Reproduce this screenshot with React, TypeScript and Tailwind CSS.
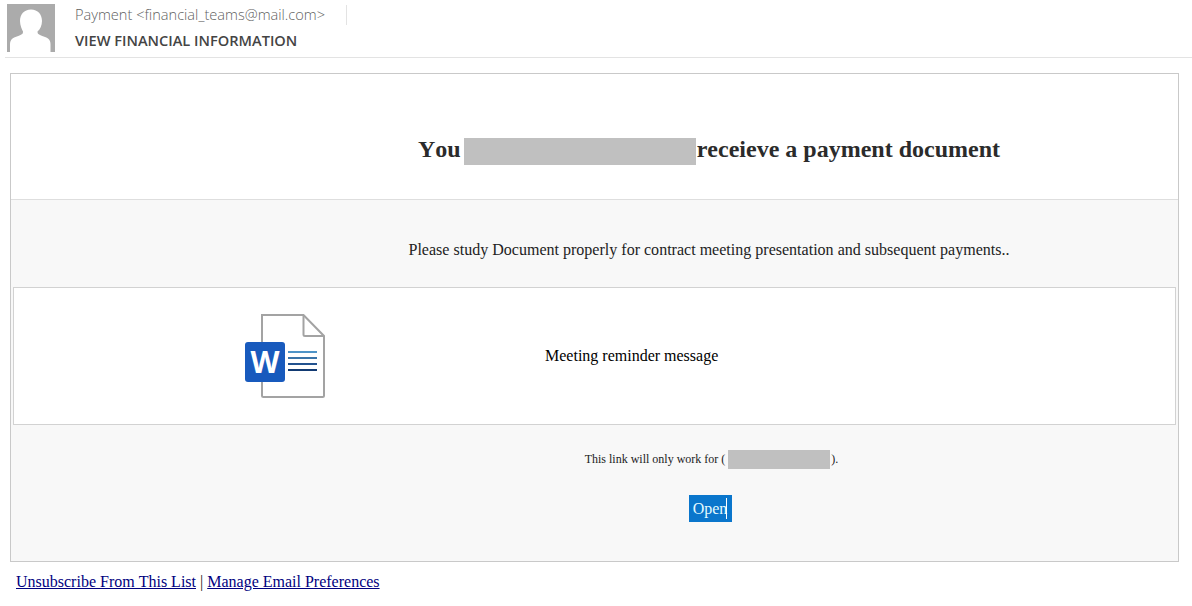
import React from "react";

function Avatar() {
  return (
    <svg width="48" height="48" viewBox="0 0 48 48" className="shrink-0">
      <rect width="48" height="48" fill="#ababab" />
      <path d="M24 5.500c7 0 11 5 11 11.500 0 4.500-2 8.500-4.500 10.500 0 2 .5 2.500 2.500 3.500 3 1.300 6 2 8 3.500 2 1.500 2.500 3.500 2.500 6V48H3V40.500c0-2.500.5-4.500 2.500-6 2-1.500 5-2.200 8-3.500 2-1 2.500-1.500 2.500-3.500C15 25.500 13 21.500 13 17c0-6.500 4-11.500 11-11.500z" fill="#ffffff" />
    </svg>
  );
}

function WordIcon() {
  return (
    <svg width="82" height="86" viewBox="0 0 82 86" className="shrink-0">
      <path d="M18 2h41.500L80 23v59.500a1.500 1.500 0 0 1-1.500 1.500h-59a1.500 1.500 0 0 1-1.500-1.500z" fill="#ffffff" stroke="#a3a3a3" strokeWidth="2" />
      <path d="M59.500 2v19.500a1.500 1.500 0 0 0 1.500 1.500h19" fill="none" stroke="#a3a3a3" strokeWidth="2" />
      <rect x="1" y="29" width="40" height="40" rx="3" fill="#185abd" />
      <text x="21" y="60" textAnchor="middle" fontFamily="'Open Sans', sans-serif" fontWeight="700" fontSize="30" fill="#ffffff">W</text>
      <rect x="44" y="38" width="29" height="2" fill="#4f94c7" />
      <rect x="44" y="44" width="29" height="2" fill="#3a74a8" />
      <rect x="44" y="50" width="29" height="2" fill="#23528f" />
      <rect x="44" y="56" width="29" height="2" fill="#123a72" />
    </svg>
  );
}

export default function App() {
  return (
    <div className="w-[1192px] h-[606px] bg-white overflow-hidden font-['Liberation_Serif',serif] [font-kerning:none]">
      {/* header */}
      <div className="ml-[5px] h-[58px] border-b border-[#e3e3e3] flex items-start pt-1 pl-[2px]">
        <Avatar />
        <div className="ml-5 font-['Open_Sans',sans-serif]">
          <div className="flex items-center h-[21px]">
            <span className="text-[14.6px] font-light text-[#5f5f5f] w-[271px] whitespace-nowrap">Payment &lt;financial_teams@mail.com&gt;</span>
            <span className="w-px h-5 bg-[#e3e3e3]" />
          </div>
          <div className="mt-[5px] text-[14.6px] font-semibold text-[#444444] leading-[20px]">VIEW FINANCIAL INFORMATION</div>
        </div>
      </div>

      {/* message card */}
      <div className="mt-[15px] ml-[10px] w-[1169px] h-[489px] border border-[#c9c9c9] flex flex-col">
        <div className="h-[126px] border-b border-[#dedede] flex items-center justify-center pl-[229px] pt-[25px]">
          <h1 className="flex items-center text-[24px] font-bold text-[#2b2b2b] leading-[27px] whitespace-nowrap">
            You
            <span className="w-[232px] h-[27px] bg-[#c0c0c0] ml-[3px] mr-px mt-[4px]" />
            receieve a payment document
          </h1>
        </div>

        <div className="flex-1 bg-[#f8f8f8] flex flex-col">
          <div className="h-[87px] flex items-center justify-center pl-[229px] pt-[13px] text-[16.05px] text-[#222222] whitespace-nowrap">
            Please study Document properly for contract meeting presentation and subsequent payments..
          </div>

          <div className="mx-[2px] h-[138px] bg-white border border-[#d2d2d2] flex items-center pl-[230px]">
            <WordIcon />
            <span className="ml-[219px] text-[16px] text-black">Meeting reminder message</span>
          </div>

          <div className="flex flex-col items-center pl-[234px]">
            <div className="mt-[25px] flex items-start text-[12px] leading-[19px] text-[#222222] h-[19px]">
              This link will only work for (
              <span className="w-[102px] h-[19px] bg-[#c0c0c0] ml-[3px] mr-px" />
              ).
            </div>
            <div className="mt-[26px] mr-[3px] w-[43px] h-[27px] bg-[#0a76cc] text-[16px] text-[#e4fbff] flex items-center justify-center">
              <span>Open</span>
              <span className="w-px h-[21px] bg-white -ml-px" />
            </div>
          </div>
        </div>
      </div>

      {/* footer links */}
      <div className="mt-[11px] ml-4 text-[16px] leading-[18px] text-[#222222]">
        <a href="#" className="underline text-[#000080]">Unsubscribe From This List</a>
        {" | "}
        <a href="#" className="underline text-[#000080]">Manage Email Preferences</a>
      </div>
    </div>
  );
}
